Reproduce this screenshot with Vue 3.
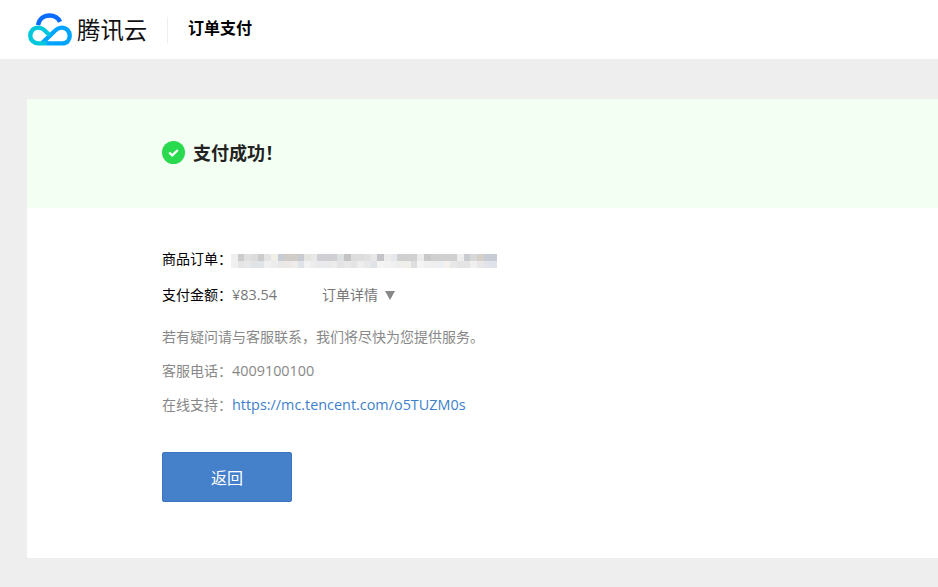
<template>
  <div class="page">
    <header class="topbar">
      <div class="brand">
        <svg class="logo" width="44" height="33" viewBox="0 0 46 34" fill="none">
          <path d="M10.5 12.5C11.5 6 16.5 2.4 22.5 2.4C27.5 2.4 31.5 4.8 33.5 9" stroke="#0a6cff" stroke-width="4.6" />
          <path d="M19 31.5H36C41 31.5 43.6 27.5 43.6 23.5C43.6 18.5 40 15 35.5 15C31.5 15 29 17 26 20.5L15 31" stroke="#00a4ff" stroke-width="4.6" />
          <path d="M19 31.5H11C6 31.5 2.4 28 2.4 23.5C2.4 18.5 6 15 10.5 15C14.5 15 17 17 20 20.5L22.5 23" stroke="#00c8dc" stroke-width="4.6" />
        </svg>
        <span class="brand-name">腾讯云</span>
      </div>
      <span class="divider"></span>
      <span class="title">订单支付</span>
    </header>

    <main class="card">
      <section class="banner">
        <svg width="23" height="23" viewBox="0 0 24 24">
          <circle cx="12" cy="12" r="12" fill="#29d94e" />
          <path d="M7.5 12l3.2 3 5.8-5.6" fill="none" stroke="#fff" stroke-width="2.4" />
        </svg>
        <h1>支付成功！</h1>
      </section>

      <section class="info">
        <div class="row order">
          <span class="label">商品订单：</span>
          <div class="blur">
            <i v-for="(c, i) in blurCells" :key="i" :style="{ background: c }"></i>
          </div>
        </div>
        <div class="row amount">
          <span class="label">支付金额：</span>
          <span class="price latin">¥83.54</span>
          <span class="detail">订单详情<em></em></span>
        </div>
        <p class="note first">若有疑问请与客服联系，我们将尽快为您提供服务。</p>
        <p class="note">客服电话：<span class="latin">4009100100</span></p>
        <p class="note">在线支持：<a class="latin" href="#">https://mc.tencent.com/o5TUZM0s</a></p>
        <button class="back">返回</button>
      </section>
    </main>
  </div>
</template>

<script setup>
const top = ['#efefef', '#cccccc', '#e0e0e0', '#dcdcdc', '#cccccc', '#e4e4e4', '#f2eee8', '#c8ccd4', '#d0ccc8', '#d0ccc8', '#c8ccd0', '#e4e4e0', '#e8e8e8', '#d0d0d4', '#d0d0d4', '#d0d0d4', '#dce0e0', '#c4c4c4', '#dddddd', '#dddddd',
  '#e0e0e0', '#e8e8e8', '#c4c4c8', '#ececec', '#e4e8ec', '#d0d0d0', '#d0d0d0', '#d0d0d0', '#ececec', '#c8c8c8', '#d0d0d0', '#d0d0d0', '#d0d0d0', '#d0d0d0', '#eeeeee', '#c8ccd0', '#d8d8d8', '#d4cfc8', '#c8ccd4', '#c8ccd4']
const bottom = ['#f0f0f0', '#e4e4e4', '#e8e8e8', '#e0e4e6', '#e0e4e6', '#f0f0f0', '#ececec', '#e8e8e8', '#ebe8e6', '#eeecea', '#dfe2e6', '#f2f2f2', '#ececec', '#e8eaec', '#e8eaec', '#ececec', '#e4e4e4', '#e8e8e8', '#e4e4e4', '#eeeeee',
  '#e8e8e8', '#dfe2e6', '#f4f4f4', '#f2f2f2', '#f0f0f0', '#eeeeee', '#f2eeea', '#dedede', '#f4f4f4', '#f0f0f0', '#eeeeee', '#ecf0f4', '#f4f0ea', '#e8e8e8', '#e4e4e4', '#e4e4e4', '#f0f0f0', '#e8e8e8', '#e2e4ea', '#dfe2e8']
const blurCells = [...top, ...bottom]
</script>

<style scoped>
.page {
  width: 938px;
  height: 587px;
  overflow: hidden;
  background: #eeeeee;
  font-family: "Open Sans", "Noto Sans CJK SC", sans-serif;
  font-size: 14px;
  color: #888;
}
.latin {
  font-size: 14.4px;
}
.topbar {
  height: 59px;
  background: #fff;
  display: flex;
  align-items: center;
  padding-left: 28px;
}
.brand {
  display: flex;
  align-items: center;
  gap: 5px;
  width: 139px;
}
.brand-name {
  font-size: 23.4px;
  color: #111;
  margin-bottom: 2px;
}
.divider {
  width: 1px;
  height: 26px;
  background: #eee;
}
.title {
  margin: 0 0 5px 20px;
  font-size: 16px;
  font-weight: 700;
  color: #000;
}
.card {
  margin: 40px 0 0 27px;
  height: 459px;
  background: #fff;
}
.banner {
  height: 106px;
  padding: 0 0 3px 135px;
  background: #f2fff2;
  display: flex;
  align-items: center;
  gap: 8px;
}
.banner h1 {
  margin: 0;
  font-size: 18px;
  font-weight: 700;
  color: #222;
}
.info {
  padding: 33px 0 0 135px;
}
.row {
  height: 36px;
  line-height: 36px;
  display: flex;
  align-items: center;
}
.label {
  color: #000;
}
.blur {
  width: 266px;
  height: 14px;
  margin: 3px 0 0 -1px;
  display: grid;
  grid-template-columns: repeat(40, 1fr);
  grid-template-rows: 1fr 1fr;
}
.price {
  width: 90px;
  color: #777;
}
.detail {
  display: flex;
  align-items: center;
  color: #777;
}
.detail em {
  margin-left: 7px;
  border: 5.5px solid transparent;
  border-top: 9px solid #888;
  border-bottom: 0;
}
.note {
  margin: 0;
  height: 34px;
  line-height: 34px;
}
.note.first {
  margin-top: 7px;
}
.note a {
  color: #3d7fcc;
  text-decoration: none;
}
.back {
  display: block;
  margin-top: 30px;
  width: 130px;
  height: 50px;
  background: #4580cb;
  border: 1px solid #3b73bd;
  border-radius: 2px;
  color: #fff;
  font: inherit;
  font-size: 16px;
}
</style>
